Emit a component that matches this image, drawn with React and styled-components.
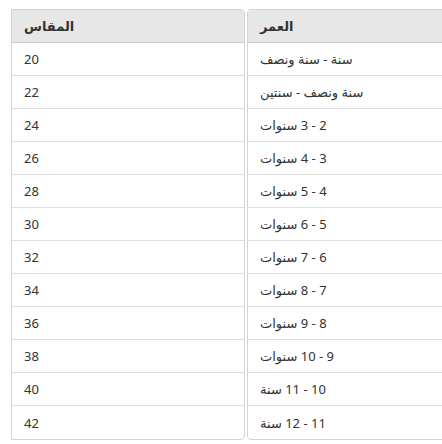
import React from 'react';
import styled, { createGlobalStyle } from 'styled-components';

const GlobalStyle = createGlobalStyle`
  html, body {
    margin: 0;
    padding: 0;
    background: #fff;
    overflow: hidden;
  }
  body {
    padding: 9px 0 0 11px;
    font-family: "Noto Sans", "DejaVu Sans", sans-serif;
  }
`;

const Table = styled.div`
  display: flex;
  gap: 2px;
  width: 700px;
`;

const Column = styled.div`
  direction: rtl;
  width: ${(p) => p.width}px;
  flex: none;
  border: 1px solid #d4d4d4;
  border-radius: ${(p) => (p.side === 'left' ? '0 4px 4px 0' : '4px 0 0 4px')};
  overflow: hidden;
  box-sizing: border-box;
`;

const HeadCell = styled.div`
  height: 33px;
  box-sizing: border-box;
  background: #e7e7e7;
  border-bottom: 1px solid #c9c9c9;
  display: flex;
  align-items: center;
  justify-content: flex-end;
  padding: 0 12px;
  font-size: 13px;
  font-weight: bold;
  color: #333;
`;

const Cell = styled.div`
  height: 33px;
  box-sizing: border-box;
  border-bottom: ${(p) => (p.last ? 'none' : '1px solid #dedede')};
  display: flex;
  align-items: center;
  justify-content: flex-end;
  padding: 0 12px;
  font-size: 13px;
  color: #333;
`;

const rows = [
  ['سنة - سنة ونصف', '20'],
  ['سنة ونصف - سنتين', '22'],
  ['2 - 3 سنوات', '24'],
  ['3 - 4 سنوات', '26'],
  ['4 - 5 سنوات', '28'],
  ['5 - 6 سنوات', '30'],
  ['6 - 7 سنوات', '32'],
  ['7 - 8 سنوات', '34'],
  ['8 - 9 سنوات', '36'],
  ['9 - 10 سنوات', '38'],
  ['10 - 11 سنة', '40'],
  ['11 - 12 سنة', '42'],
];

export default function App() {
  return (
    <>
      <GlobalStyle />
      <Table>
        <Column side="left" width={234}>
          <HeadCell>المقاس</HeadCell>
          {rows.map((r, i) => (
            <Cell key={i} last={i === rows.length - 1}>
              <span>{r[1]}</span>
            </Cell>
          ))}
        </Column>
        <Column side="right" width={232}>
          <HeadCell>العمر</HeadCell>
          {rows.map((r, i) => (
            <Cell key={i} last={i === rows.length - 1}>
              <span>{r[0]}</span>
            </Cell>
          ))}
        </Column>
      </Table>
    </>
  );
}
